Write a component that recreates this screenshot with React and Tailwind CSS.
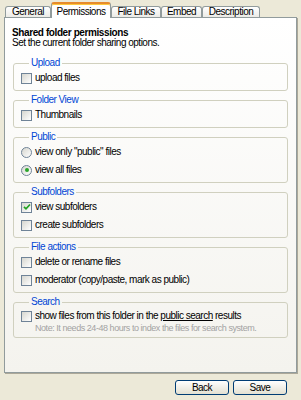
import React from "react";

function Box({ checked }) {
  return (
    <span className="w-[11px] h-[11px] shrink-0 border border-[#6f8397] bg-linear-to-br from-[#d6d6cf] to-white flex items-center justify-center">
      {checked && (
        <svg width="8" height="8" viewBox="0 0 8 8">
          <path d="M1 3.8 L3 5.8 L7 1.5" fill="none" stroke="#21a121" strokeWidth="1.7" />
        </svg>
      )}
    </span>
  );
}

function Radio({ checked }) {
  return (
    <span className="w-[11px] h-[11px] shrink-0 rounded-full border border-[#6f8397] bg-linear-to-br from-[#d6d6cf] to-white flex items-center justify-center">
      {checked && <span className="w-[4px] h-[4px] rounded-full bg-[#2aa52a]" />}
    </span>
  );
}

function Row({ radio, checked, children }) {
  return (
    <div className="flex items-center gap-[3px] h-[12px] leading-[12px] whitespace-nowrap">
      {radio ? <Radio checked={checked} /> : <Box checked={checked} />}
      <span>{children}</span>
    </div>
  );
}

function Group({ title, children, tight }) {
  return (
    <fieldset className={"border border-[#d0d0bf] rounded-[3px] pl-[7px] " + (tight ? "pb-[4px]" : "pb-[6px]")}>
      <legend className="ml-[8px] px-[2px] leading-[10px] text-[#0046d5]">{title}</legend>
      <div className={"flex flex-col gap-[6px] " + (tight ? "mt-[3px]" : "mt-[4px]")}>{children}</div>
    </fieldset>
  );
}

function Tab({ label, width, active }) {
  if (active) {
    return (
      <div
        className={
          "relative z-10 -mb-px h-[16px] bg-white border-x border-[#919b9c] border-t-2 border-t-[#e68b2c] rounded-t-[3px] shadow-[inset_0_1px_0_#ffc83c] flex items-center justify-center " +
          width
        }
      >
        {label}
      </div>
    );
  }
  return (
    <div
      className={
        "h-[11px] border-x border-t border-[#919b9c] rounded-t-[3px] bg-linear-to-b from-white to-[#ecebe6] flex items-center justify-center leading-[10px] " +
        width
      }
    >
      {label}
    </div>
  );
}

export default function App() {
  return (
    <div className="w-[301px] h-[400px] overflow-hidden bg-[#ece9d8] font-['Liberation_Sans',Arial,sans-serif] text-[10px] tracking-[-0.5px] text-black pt-[2px] pl-[4px]">
      <div className="flex items-end h-[15px] pl-[1px]">
        <Tab label="General" width="w-[46px]" />
        <Tab label="Permissions" width="w-[60px]" active />
        <Tab label="File Links" width="w-[50px]" />
        <Tab label="Embed" width="w-[41px]" />
        <Tab label="Description" width="w-[58px]" />
      </div>
      <div className="w-[293px] h-[356px] border border-[#919b9c] bg-linear-to-b from-white to-[#f4f3ee] shadow-[1px_1px_0_#aca899] pt-[9px] px-[8px] flex flex-col">
        <div className="-ml-px font-bold tracking-[-0.4px] leading-[11px]">Shared folder permissions</div>
        <div className="-ml-px leading-[10px]">Set the current folder sharing options.</div>
        <div className="mt-[10px] flex flex-col gap-[4px]">
          <Group title="Upload">
            <Row>upload files</Row>
          </Group>
          <Group title="Folder View">
            <Row>Thumbnails</Row>
          </Group>
          <Group title="Public">
            <Row radio>view only "public" files</Row>
            <Row radio checked>view all files</Row>
          </Group>
          <Group title="Subfolders">
            <Row checked>view subfolders</Row>
            <Row>create subfolders</Row>
          </Group>
          <Group title="File actions">
            <Row>delete or rename files</Row>
            <Row>moderator (copy/paste, mark as public)</Row>
          </Group>
          <fieldset className="border border-[#d0d0bf] rounded-[3px] pl-[7px] pb-[4px]">
            <legend className="ml-[8px] px-[2px] leading-[10px] text-[#0046d5]">Search</legend>
            <div className="mt-[3px]">
              <Row>
                show files from this folder in the <span className="underline">public search</span> results
              </Row>
              <div className="pl-[14px] mt-[1px] text-[9px] tracking-[-0.45px] leading-[10px] text-[#a3a3a3] whitespace-nowrap">
                Note: It needs 24-48 hours to index the files for search system.
              </div>
            </div>
          </fieldset>
        </div>
      </div>
      <div className="flex justify-end gap-[4px] mt-[7px] pr-[14px]">
        <button className="w-[54px] h-[15px] border border-[#003c74] rounded-[3px] bg-linear-to-b from-white to-[#e3e0d2] leading-[13px] text-[10px]">
          Back
        </button>
        <button className="w-[54px] h-[15px] border border-[#003c74] rounded-[3px] bg-linear-to-b from-white to-[#e3e0d2] leading-[13px] text-[10px]">
          Save
        </button>
      </div>
    </div>
  );
}
